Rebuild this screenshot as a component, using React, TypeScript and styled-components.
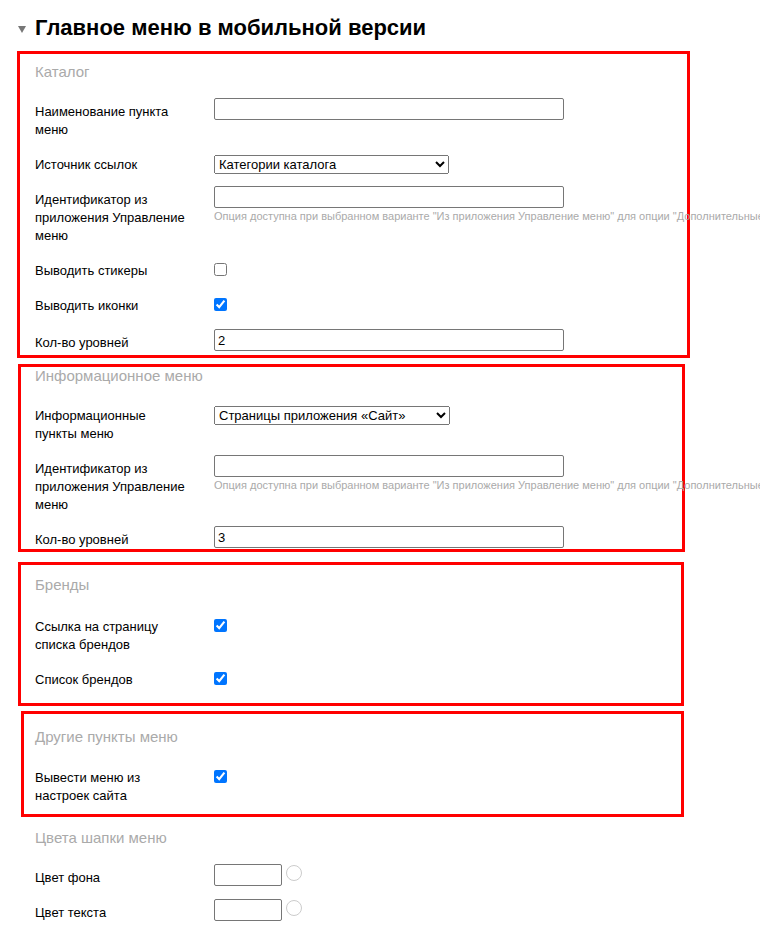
import styled, { createGlobalStyle } from "styled-components";

const GlobalStyle = createGlobalStyle`
html, body {
  margin: 0;
  padding: 0;
  background: #fff;
  overflow-x: hidden;
}
body {
  font-family: "Liberation Sans", Arial, sans-serif;
  color: #000;
}
`;

const Page = styled.div`
display: flex;
flex-flow: column nowrap;
padding-top: 16px;
`;

const Header = styled.div`
display: flex;
flex-flow: row nowrap;
align-items: center;
gap: 9px;
padding-left: 18px;
margin-bottom: 11px;
`;

const Caret = styled.span`
display: block;
width: 0;
height: 0;
margin-top: 3px;
border-left: 4px solid transparent;
border-right: 4px solid transparent;
border-top: 7px solid #777;
`;

const Title = styled.h1`
margin: 0;
font-size: 22px;
line-height: 24px;
font-weight: bold;
`;

interface ISectionBox {
  $left: number;
  $width?: number;
  $top: number;
  $padTop: number;
  $padBottom: number;
  $padLeft: number;
  $boxed: boolean;
}

const Section = styled.div<ISectionBox>`
box-sizing: border-box;
margin-left: ${(p) => p.$left}px;
margin-top: ${(p) => p.$top}px;
width: ${(p) => (p.$width ? `${p.$width}px` : "auto")};
padding: ${(p) => p.$padTop}px 0 ${(p) => p.$padBottom}px ${(p) => p.$padLeft}px;
border: ${(p) => (p.$boxed ? "3px solid #ff0000" : "none")};
`;

const SectionTitle = styled.div`
font-size: 15px;
line-height: 18px;
color: #aaa;
margin-bottom: 17px;
`;

const Rows = styled.div`
display: flex;
flex-flow: column nowrap;
gap: 12px;
`;

const Row = styled.div<{ $extra?: number }>`
display: flex;
flex-flow: row nowrap;
align-items: flex-start;
margin-top: ${(p) => p.$extra ?? 0}px;
`;

const Label = styled.div`
flex: none;
box-sizing: border-box;
width: 179px;
padding: 5px 25px 0 0;
font-size: 13px;
line-height: 18px;
`;

const Value = styled.div<{ $offset: number }>`
display: flex;
flex-flow: column nowrap;
align-items: flex-start;
padding-top: ${(p) => p.$offset}px;
min-width: 0;
`;

const TextInput = styled.input<{ $w: number }>`
box-sizing: border-box;
width: ${(p) => p.$w}px;
height: 22px;
margin: 0;
padding: 1px 3px;
border: 1px solid #767676;
border-radius: 2px;
font-family: "Liberation Sans", Arial, sans-serif;
font-size: 13px;
color: #000;
background: #fff;
`;

const Select = styled.select<{ $w: number }>`
box-sizing: border-box;
width: ${(p) => p.$w}px;
height: 19px;
margin: 0;
font-family: "Liberation Sans", Arial, sans-serif;
font-size: 13px;
color: #000;
`;

const Check = styled.input`
width: 13px;
height: 13px;
margin: 0;
`;

const Hint = styled.div`
margin-top: 1px;
font-size: 11px;
line-height: 14px;
color: #aaa;
white-space: nowrap;
`;

const ColorRow = styled.div`
display: flex;
flex-flow: row nowrap;
align-items: flex-start;
gap: 4px;
`;

const ColorDot = styled.span`
display: block;
box-sizing: border-box;
width: 16px;
height: 16px;
margin-top: 1px;
border: 1px solid #ccc;
border-radius: 50%;
background: #fff;
`;

const hintText =
  'Опция доступна при выбранном варианте "Из приложения Управление меню" для опции "Дополнительные пункты меню"';

export default function App() {
  return (
    <>
      <GlobalStyle />
      <Page>
        <Header>
          <Caret />
          <Title>Главное меню в мобильной версии</Title>
        </Header>

        {/* Каталог */}
        <Section $boxed $left={17} $width={673} $top={0} $padTop={9} $padBottom={3} $padLeft={15}>
          <SectionTitle>Каталог</SectionTitle>
          <Rows>
            <Row>
              <Label>Наименование пункта меню</Label>
              <Value $offset={0}>
                <TextInput $w={350} type="text" defaultValue="" />
              </Value>
            </Row>
            <Row>
              <Label>Источник ссылок</Label>
              <Value $offset={4}>
                <Select $w={235} defaultValue="cat">
                  <option value="cat">Категории каталога</option>
                </Select>
              </Value>
            </Row>
            <Row>
              <Label>Идентификатор из приложения Управление меню</Label>
              <Value $offset={0}>
                <TextInput $w={350} type="text" defaultValue="" />
                <Hint>{hintText}</Hint>
              </Value>
            </Row>
            <Row>
              <Label>Выводить стикеры</Label>
              <Value $offset={6}>
                <Check type="checkbox" />
              </Value>
            </Row>
            <Row>
              <Label>Выводить иконки</Label>
              <Value $offset={6}>
                <Check type="checkbox" defaultChecked />
              </Value>
            </Row>
            <Row $extra={2}>
              <Label>Кол-во уровней</Label>
              <Value $offset={0}>
                <TextInput $w={350} type="text" defaultValue="2" />
              </Value>
            </Row>
          </Rows>
        </Section>

        {/* Информационное меню */}
        <Section $boxed $left={18} $width={667} $top={6} $padTop={0} $padBottom={0} $padLeft={14}>
          <SectionTitle>Информационное меню</SectionTitle>
          <Rows>
            <Row>
              <Label>Информационные пункты меню</Label>
              <Value $offset={4}>
                <Select $w={236} defaultValue="site">
                  <option value="site">Страницы приложения «Сайт»</option>
                </Select>
              </Value>
            </Row>
            <Row>
              <Label>Идентификатор из приложения Управление меню</Label>
              <Value $offset={0}>
                <TextInput $w={350} type="text" defaultValue="" />
                <Hint>{hintText}</Hint>
              </Value>
            </Row>
            <Row>
              <Label>Кол-во уровней</Label>
              <Value $offset={0}>
                <TextInput $w={350} type="text" defaultValue="3" />
              </Value>
            </Row>
          </Rows>
        </Section>

        {/* Бренды */}
        <Section $boxed $left={18} $width={666} $top={10} $padTop={11} $padBottom={14} $padLeft={14}>
          <SectionTitle>Бренды</SectionTitle>
          <Rows>
            <Row $extra={2}>
              <Label>Ссылка на страницу списка брендов</Label>
              <Value $offset={6}>
                <Check type="checkbox" defaultChecked />
              </Value>
            </Row>
            <Row>
              <Label>Список брендов</Label>
              <Value $offset={6}>
                <Check type="checkbox" defaultChecked />
              </Value>
            </Row>
          </Rows>
        </Section>

        {/* Другие пункты меню */}
        <Section $boxed $left={21} $width={663} $top={5} $padTop={14} $padBottom={9} $padLeft={11}>
          <SectionTitle>Другие пункты меню</SectionTitle>
          <Rows>
            <Row $extra={1}>
              <Label>Вывести меню из настроек сайта</Label>
              <Value $offset={6}>
                <Check type="checkbox" defaultChecked />
              </Value>
            </Row>
          </Rows>
        </Section>

        {/* Цвета шапки меню */}
        <Section $boxed={false} $left={0} $top={12} $padTop={0} $padBottom={0} $padLeft={35}>
          <SectionTitle>Цвета шапки меню</SectionTitle>
          <Rows>
            <Row>
              <Label>Цвет фона</Label>
              <Value $offset={0}>
                <ColorRow>
                  <TextInput $w={68} type="text" defaultValue="" />
                  <ColorDot />
                </ColorRow>
              </Value>
            </Row>
            <Row>
              <Label>Цвет текста</Label>
              <Value $offset={0}>
                <ColorRow>
                  <TextInput $w={68} type="text" defaultValue="" />
                  <ColorDot />
                </ColorRow>
              </Value>
            </Row>
          </Rows>
        </Section>
      </Page>
    </>
  );
}
